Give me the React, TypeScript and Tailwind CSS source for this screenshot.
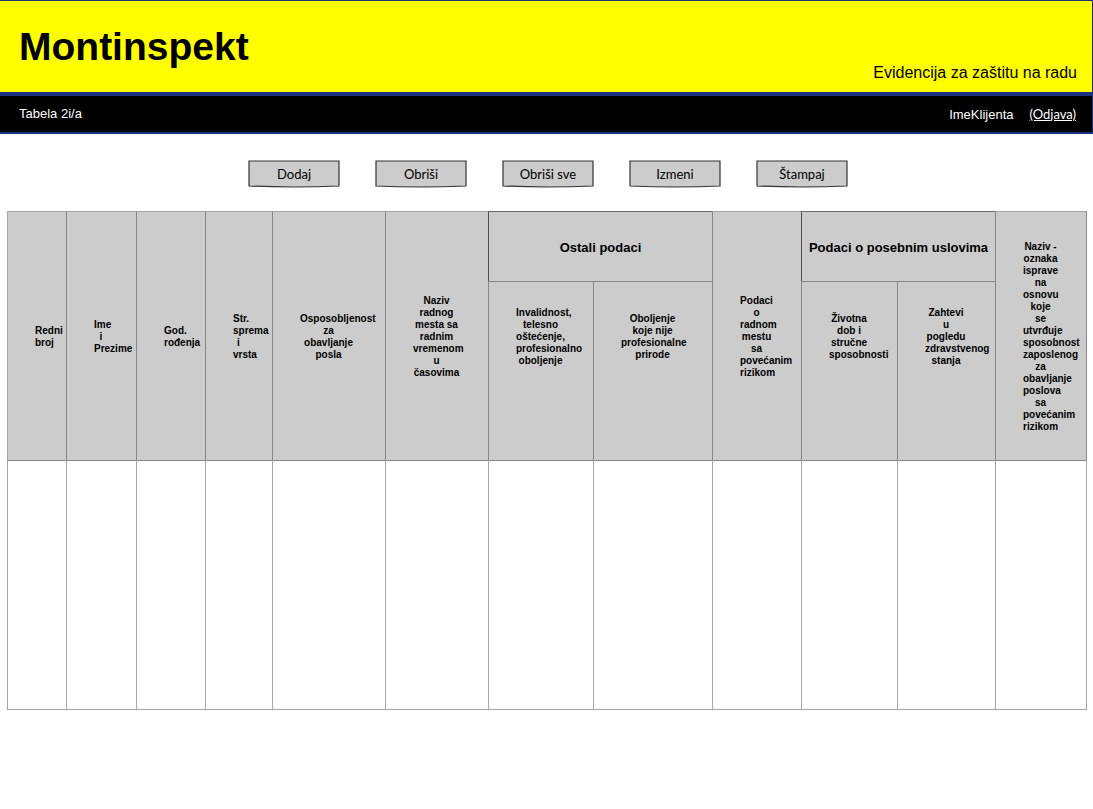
import React from "react";

type HeaderCell = { lines: string[] };

const columnWidths: string[] = [
  "w-[59px]",
  "w-[70px]",
  "w-[69px]",
  "w-[67px]",
  "w-[113px]",
  "w-[103px]",
  "w-[105px]",
  "w-[119px]",
  "w-[89px]",
  "w-[96px]",
  "w-[98px]",
  "w-[92px]",
];

const leading: HeaderCell[] = [
  { lines: ["Redni", "broj"] },
  { lines: ["Ime", "i", "Prezime"] },
  { lines: ["God.", "rođenja"] },
  { lines: ["Str.", "sprema", "i", "vrsta"] },
  { lines: ["Osposobljenost", "za", "obavljanje", "posla"] },
  { lines: ["Naziv", "radnog", "mesta sa", "radnim", "vremenom", "u", "časovima"] },
];

const risk: HeaderCell = {
  lines: ["Podaci", "o", "radnom", "mestu", "sa", "povećanim", "rizikom"],
};

const certificate: HeaderCell = {
  lines: [
    "Naziv -", "oznaka", "isprave", "na", "osnovu", "koje", "se", "utvrđuje",
    "sposobnost", "zaposlenog", "za", "obavljanje", "poslova", "sa", "povećanim", "rizikom",
  ],
};

const subHeaders: HeaderCell[] = [
  { lines: ["Invalidnost,", "telesno", "oštećenje,", "profesionalno", "oboljenje"] },
  { lines: ["Oboljenje", "koje nije", "profesionalne", "prirode"] },
  { lines: ["Životna", "dob i", "stručne", "sposobnosti"] },
  { lines: ["Zahtevi", "u", "pogledu", "zdravstvenog", "stanja"] },
];

const actions: string[] = ["Dodaj", "Obriši", "Obriši sve", "Izmeni", "Štampaj"];

function Lines({ lines }: HeaderCell) {
  return (
    <>
      {lines.map((line, i) => (
        <span key={i} className="block whitespace-nowrap">
          {line}{" "}
        </span>
      ))}
    </>
  );
}

function TallHeader({ lines, last = false }: HeaderCell & { last?: boolean }) {
  return (
    <th
      scope="col"
      rowSpan={2}
      className={
        last
          ? "border-l border-t border-r border-l-[#878787] border-t-[#a5a5a5] border-r-[#878787] pt-[2px] pl-[27px] pr-7 align-middle"
          : "border-l border-t border-l-[#878787] border-t-[#a5a5a5] pt-[2px] pl-[27px] pr-7 align-middle first:border-l-[#a5a5a5]"
      }
    >
      <Lines lines={lines} />
    </th>
  );
}

function GroupHeader({ title }: { title: string }) {
  return (
    <th
      scope="colgroup"
      colSpan={2}
      className="border-l border-t border-l-[#505050] border-t-[#6b6b6b] pt-[2px] align-middle text-[13px] leading-4 whitespace-nowrap"
    >
      {title}
    </th>
  );
}

function ActionButton({ label }: { label: string }) {
  return (
    <button
      type="button"
      className="relative h-7 w-[92px] cursor-pointer pb-px font-['Comic_Sans_MS',Lato,sans-serif] text-[13px] leading-4"
    >
      <svg className="absolute inset-0" width="92" height="28" viewBox="0 0 92 28" aria-hidden="true">
        <path d="M1 1H91V26Q46 28 1 26Z" fill="#ccc" stroke="#333" strokeWidth="1.2" />
      </svg>
      <span className="relative">{label}</span>
    </button>
  );
}

export default function App() {
  return (
    <div className="min-h-screen bg-white font-['Liberation_Sans',Arial,sans-serif] text-black">
      <header>
        <div className="flex h-24 items-end justify-between border-t border-r border-b-4 border-[#1b3281] bg-[#ffff00] pr-[15px] pb-[9px] pl-[19px]">
          <h1 className="self-center pt-[9px] text-[39px] leading-[46px] font-bold">Montinspekt</h1>
          <p className="text-base leading-5">Evidencija za zaštitu na radu</p>
        </div>
        <div className="flex h-[38px] items-center justify-between border-r border-b-2 border-[#1b3281] bg-black pr-4 pl-[19px] text-[13px] leading-4 text-white">
          <h2>Tabela 2i/a</h2>
          <div className="flex items-baseline gap-4">
            <span>ImeKlijenta</span>
            <a href="#odjava" className="font-['Comic_Sans_MS',Lato,sans-serif] underline">
              (Odjava)
            </a>
          </div>
        </div>
      </header>

      <main className="pt-[26px] pr-[6px] pb-10 pl-[7px]">
        <div className="flex justify-center gap-[35px] pl-[2px]">
          {actions.map((label) => (
            <ActionButton key={label} label={label} />
          ))}
        </div>

        <table className="mt-[23px] w-full table-fixed border-separate border-spacing-0">
          <colgroup>
            {columnWidths.map((width, i) => (
              <col key={i} className={width} />
            ))}
          </colgroup>
          <thead className="bg-[#ccc] text-center text-[10px] leading-3 font-bold">
            <tr className="h-[70px]">
              {leading.map((cell) => (
                <TallHeader key={cell.lines[0]} lines={cell.lines} />
              ))}
              <GroupHeader title="Ostali podaci" />
              <TallHeader lines={risk.lines} />
              <GroupHeader title="Podaci o posebnim uslovima" />
              <TallHeader lines={certificate.lines} last />
            </tr>
            <tr className="h-[179px]">
              {subHeaders.map((cell) => (
                <th
                  key={cell.lines[0]}
                  scope="col"
                  className="border-l border-t border-[#878787] pr-7 pb-[68px] pl-[27px] align-middle"
                >
                  <Lines lines={cell.lines} />
                </th>
              ))}
            </tr>
          </thead>
          <tbody>
            <tr className="h-[250px]">
              {columnWidths.map((_, i) => (
                <td
                  key={i}
                  className="border-l border-t border-b border-[#a5a5a5] border-t-[#878787] last:border-r"
                />
              ))}
            </tr>
          </tbody>
        </table>
      </main>
    </div>
  );
}
